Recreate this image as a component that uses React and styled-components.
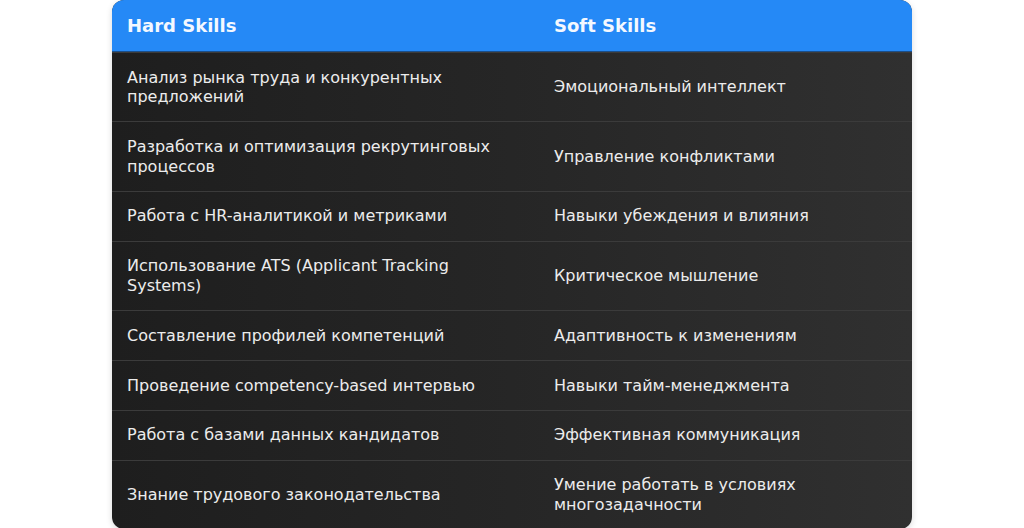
import React from "react";
import styled, { createGlobalStyle } from "styled-components";

const Global = createGlobalStyle`
  html, body { margin: 0; padding: 0; background: #ffffff; }
  body { font-family: "DejaVu Sans", "Noto Sans", sans-serif; }
`;

const Page = styled.div`
  display: flex;
  justify-content: center;
`;

const Card = styled.div`
  width: 800px;
  border-radius: 12px;
  overflow: hidden;
  background: linear-gradient(90deg, #1e1e1e 0%, #262626 50%, #303030 100%);
  box-shadow: 0 2px 6px rgba(0, 0, 0, 0.15);
`;

const Row = styled.div`
  display: grid;
  grid-template-columns: 427px 1fr;
  align-items: center;
  border-top: ${(p) => (p.$header ? "none" : "1px solid #3b3b3b")};
  background: ${(p) => (p.$header ? "#2589f6" : "transparent")};
  border-bottom: ${(p) => (p.$header ? "1px solid #1c4f8a" : "none")};
`;

const HeadCell = styled.div`
  padding: 16px 15px 15px;
  font-size: 18px;
  font-weight: bold;
  line-height: 20px;
  color: #f4f8ff;
`;

const Cell = styled.div`
  padding: 14.7px 15px;
  font-size: 16px;
  line-height: 19.5px;
  color: #ececec;
`;

const rows = [
  ["Анализ рынка труда и конкурентных предложений", "Эмоциональный интеллект"],
  ["Разработка и оптимизация рекрутинговых процессов", "Управление конфликтами"],
  ["Работа с HR-аналитикой и метриками", "Навыки убеждения и влияния"],
  ["Использование ATS (Applicant Tracking Systems)", "Критическое мышление"],
  ["Составление профилей компетенций", "Адаптивность к изменениям"],
  ["Проведение competency-based интервью", "Навыки тайм-менеджмента"],
  ["Работа с базами данных кандидатов", "Эффективная коммуникация"],
  ["Знание трудового законодательства", "Умение работать в условиях многозадачности"],
];

export default function App() {
  return (
    <>
      <Global />
      <Page>
        <Card>
          <Row $header>
            <HeadCell>Hard Skills</HeadCell>
            <HeadCell>Soft Skills</HeadCell>
          </Row>
          {rows.map(([a, b], i) => (
            <Row key={i}>
              <Cell>{a}</Cell>
              <Cell>{b}</Cell>
            </Row>
          ))}
        </Card>
      </Page>
    </>
  );
}
